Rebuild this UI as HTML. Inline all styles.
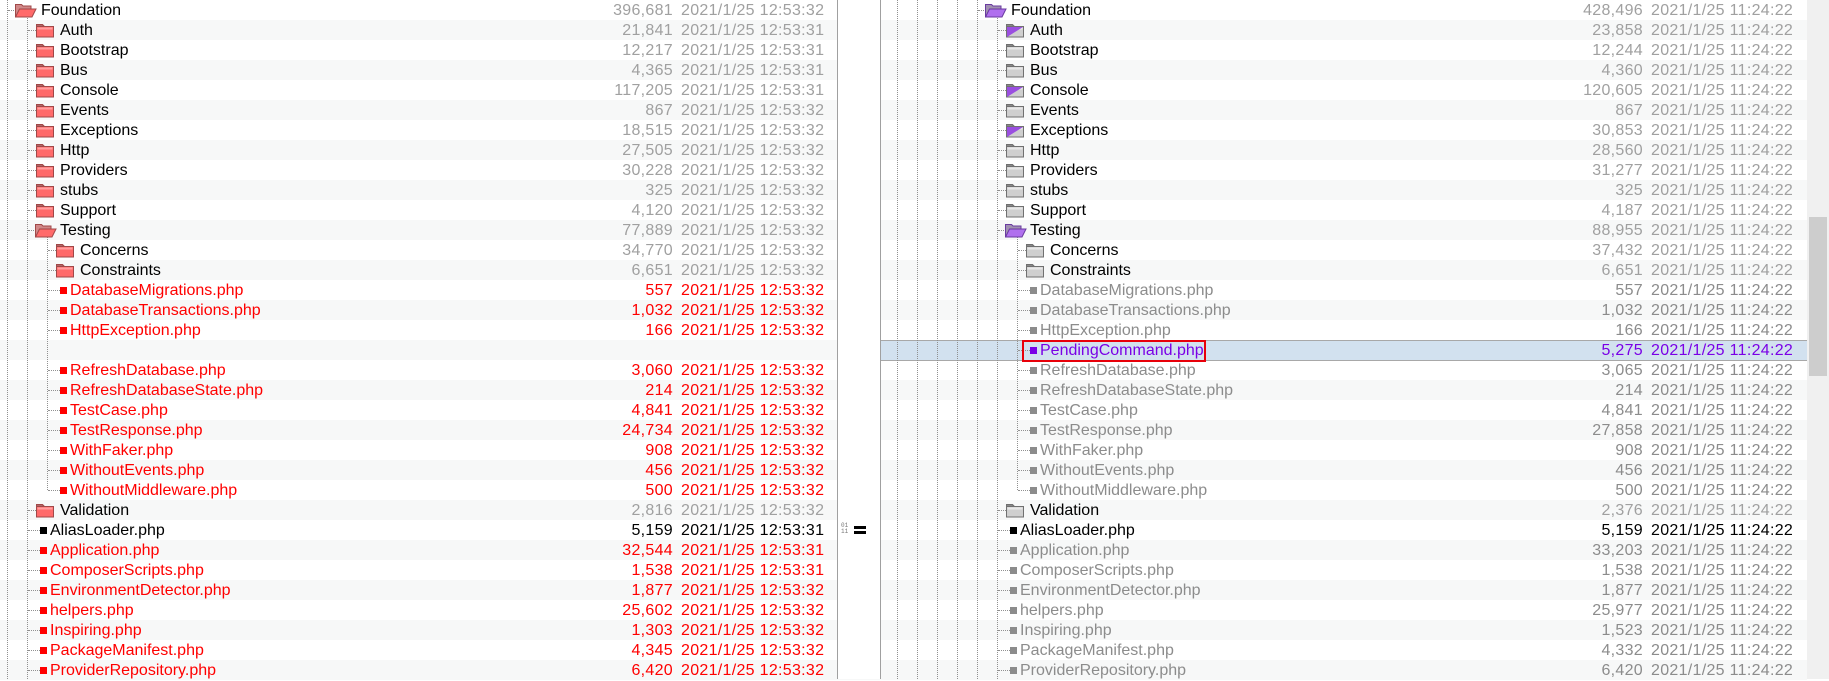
<!DOCTYPE html>
<html><head><meta charset="utf-8"><style>
*{margin:0;padding:0;box-sizing:border-box}
body{width:1829px;height:679px;overflow:hidden;background:#fff;font-family:"Liberation Sans","Noto Sans CJK SC",sans-serif;font-size:16px;position:relative}
.bg{position:absolute;left:0;width:1807px;height:20px}
.t{position:absolute;line-height:20px;height:20px;white-space:nowrap;padding-top:1px}
.d{letter-spacing:0.3px}
.n{text-align:right}
.v{position:absolute;width:0;border-left:1px dotted #909090}
.h{position:absolute;height:0;border-top:1px dotted #909090}
.sq{position:absolute;width:7px;height:7px}
svg{position:absolute}
</style></head><body>
<div id="root"></div>
<script>
var R=document.getElementById('root'),H='';
function add(s){H+=s;}
var G='#8c8c8c',LG='#a0a0a0',RD='#ff0000',BK='#000';
var rows=[
[0,'o','Foundation','396,681',2,BK,LG,'428,496',BK,LG,1],
[1,'f','Auth','21,841',1,BK,LG,'23,858',BK,LG,1],
[1,'f','Bootstrap','12,217',1,BK,LG,'12,244',BK,LG,0],
[1,'f','Bus','4,365',1,BK,LG,'4,360',BK,LG,0],
[1,'f','Console','117,205',1,BK,LG,'120,605',BK,LG,1],
[1,'f','Events','867',2,BK,LG,'867',BK,LG,0],
[1,'f','Exceptions','18,515',2,BK,LG,'30,853',BK,LG,1],
[1,'f','Http','27,505',2,BK,LG,'28,560',BK,LG,0],
[1,'f','Providers','30,228',2,BK,LG,'31,277',BK,LG,0],
[1,'f','stubs','325',2,BK,LG,'325',BK,LG,0],
[1,'f','Support','4,120',2,BK,LG,'4,187',BK,LG,0],
[1,'o','Testing','77,889',2,BK,LG,'88,955',BK,LG,1],
[2,'f','Concerns','34,770',2,BK,LG,'37,432',BK,LG,0],
[2,'f','Constraints','6,651',2,BK,LG,'6,651',BK,LG,0],
[2,'p','DatabaseMigrations.php','557',2,RD,RD,'557',G,G,0],
[2,'p','DatabaseTransactions.php','1,032',2,RD,RD,'1,032',G,G,0],
[2,'p','HttpException.php','166',2,RD,RD,'166',G,G,0],
[2,'x','PendingCommand.php','',0,RD,RD,'5,275','#7a00e6','#7a00e6',0],
[2,'p','RefreshDatabase.php','3,060',2,RD,RD,'3,065',G,G,0],
[2,'p','RefreshDatabaseState.php','214',2,RD,RD,'214',G,G,0],
[2,'p','TestCase.php','4,841',2,RD,RD,'4,841',G,G,0],
[2,'p','TestResponse.php','24,734',2,RD,RD,'27,858',G,G,0],
[2,'p','WithFaker.php','908',2,RD,RD,'908',G,G,0],
[2,'p','WithoutEvents.php','456',2,RD,RD,'456',G,G,0],
[2,'p','WithoutMiddleware.php','500',2,RD,RD,'500',G,G,0],
[1,'f','Validation','2,816',2,BK,LG,'2,376',BK,LG,0],
[1,'p','AliasLoader.php','5,159',1,BK,BK,'5,159',BK,BK,0],
[1,'p','Application.php','32,544',1,RD,RD,'33,203',G,G,0],
[1,'p','ComposerScripts.php','1,538',1,RD,RD,'1,538',G,G,0],
[1,'p','EnvironmentDetector.php','1,877',2,RD,RD,'1,877',G,G,0],
[1,'p','helpers.php','25,602',2,RD,RD,'25,977',G,G,0],
[1,'p','Inspiring.php','1,303',2,RD,RD,'1,523',G,G,0],
[1,'p','PackageManifest.php','4,345',2,RD,RD,'4,332',G,G,0],
[1,'p','ProviderRepository.php','6,420',2,RD,RD,'6,420',G,G,0]
];
for(var i=0;i<34;i++){ if(i%2==1) add('<div class="bg" style="top:'+(i*20)+'px;background:#f7f8f8"></div>'); }
add('<div style="position:absolute;left:881px;width:926px;top:340px;height:21px;background:#d2e1ef;border-top:1px solid #a8a8a8;border-bottom:1px solid #a8a8a8"></div>');
add('<div style="position:absolute;left:837px;top:0;width:44px;height:679px;background:#fff;border-left:1px solid #a0a0a0;border-right:1px solid #a0a0a0"></div>');
function closedF(x,y,kind){
 var body,edge,tab;
 if(kind=='r'){body='#ff6a6a';edge='#a04848';tab='#c08888';}
 else {body='#cfcfcf';edge='#707070';tab='#a0a0a0';}
 var s='<svg style="left:'+x+'px;top:'+(y+3)+'px" width="19" height="15" viewBox="0 0 19 15">'+
 '<path d="M0.5 1.5h6l1.5 1.5h-7.5z" fill="'+tab+'" stroke="'+edge+'"/>'+
 '<rect x="0.5" y="3.5" width="17" height="10.5" fill="'+body+'" stroke="'+edge+'"/>'+
 '<rect x="1.5" y="4.5" width="15" height="2" fill="'+(kind=='r'?'#ffa0a0':'#e8e8e8')+'"/>';
 if(kind=='p') s+='<path d="M1 4h16L1 14z" fill="#9a4fe0"/>';
 return s+'</svg>';
}
function openF(x,y,kind){
 var body=kind=='r'?'#ff6a6a':'#b070ee',edge=kind=='r'?'#a04848':'#6a3aa0',back=kind=='r'?'#d08888':'#a090b0';
 return '<svg style="left:'+x+'px;top:'+(y+3)+'px" width="22" height="15" viewBox="0 0 22 15">'+
 '<path d="M0.5 14V1.5h6l1.5 1.5h8v3" fill="'+back+'" stroke="'+edge+'"/>'+
 '<path d="M0.5 14l4-8h16.5l-4 8z" fill="'+body+'" stroke="'+edge+'"/></svg>';
}
function pane(off,side){
 var cx=[7,27,47];
 add('<div class="v" style="left:'+(off+7)+'px;top:0;height:679px"></div>');
 add('<div class="v" style="left:'+(off+27)+'px;top:10px;height:669px"></div>');
 add('<div class="v" style="left:'+(off+47)+'px;top:230px;height:260px"></div>');
 for(var i=0;i<rows.length;i++){
  var r=rows[i],y=i*20,L=r[0],t=r[1];
  if(side=='L'&&t=='x') { continue; }
  var lx=off+cx[L],ix,tx;
  var isF=(t=='f'||t=='o');
  if(isF){ix=off+16+20*L;tx=ix+(L==0?25:24);} else {ix=off+20+20*L;tx=ix+10;}
  add('<div class="h" style="left:'+(lx+1)+'px;top:'+(y+10)+'px;width:'+(ix-lx-1)+'px"></div>');
  var ncol,nmcol,kind;
  if(side=='L'){nmcol=r[5];ncol=r[6];kind='r';}
  else {nmcol=r[8];ncol=r[9];kind=r[10]?'p':'g';}
  if(t=='o') add(openF(ix-1,y,side=='L'?'r':'p'));
  else if(t=='f') add(closedF(ix,y,kind));
  else add('<div class="sq" style="left:'+ix+'px;top:'+(y+7)+'px;background:'+nmcol+'"></div>');
  add('<div class="t" style="left:'+tx+'px;top:'+y+'px;color:'+nmcol+'">'+r[2]+'</div>');
  var num=side=='L'?r[3]:r[7];
  var tm=side=='L'?(r[4]==1?'2021/1/25 12:53:31':'2021/1/25 12:53:32'):'2021/1/25 11:24:22';
  var nr=side=='L'?673:1643, dl=side=='L'?681:1651;
  add('<div class="t n d" style="left:'+(nr-100)+'px;width:100px;top:'+y+'px;color:'+ncol+'">'+num+'</div>');
  add('<div class="t d" style="left:'+dl+'px;top:'+y+'px;color:'+ncol+'">'+tm+'</div>');
 }
}
pane(0,'L');
[897,917,937,957].forEach(function(x){add('<div class="v" style="left:'+x+'px;top:0;height:679px"></div>');});
pane(970,'R');
add('<div style="position:absolute;left:1022px;top:340px;width:184px;height:22px;border:2px solid #e8000a"></div>');
add('<div style="position:absolute;left:841px;top:523px;font-size:6px;line-height:6px;color:#777;font-family:Liberation Mono,monospace">01<br>11</div>');
add('<div style="position:absolute;left:854px;top:526px;width:12px;height:3px;background:#000"></div><div style="position:absolute;left:854px;top:531px;width:12px;height:3px;background:#000"></div>');
add('<div style="position:absolute;left:1807px;top:0;width:22px;height:679px;background:#f0f0f0"></div>');
add('<div style="position:absolute;left:1809px;top:217px;width:18px;height:159px;background:#cdcdcd"></div>');
R.innerHTML=H;
</script>
</body></html>
